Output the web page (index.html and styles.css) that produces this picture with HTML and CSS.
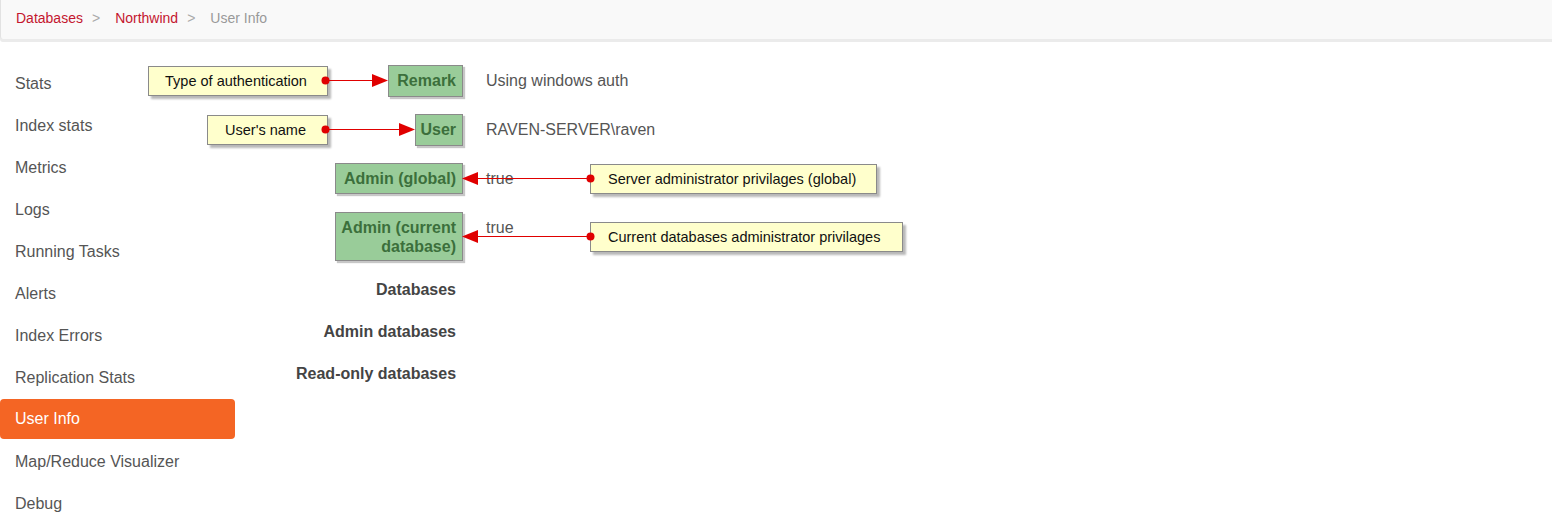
FILE: index.html
```html
<!DOCTYPE html>
<html>
<head>
<meta charset="utf-8">
<link rel="stylesheet" href="styles.css">
</head>
<body>
<div class="topbar">
  <nav class="crumbs">
    <a class="crumb-link">Databases</a><span class="sep">&gt;</span><a class="crumb-link">Northwind</a><span class="sep">&gt;</span><span class="crumb-current">User Info</span>
  </nav>
</div>
<div class="page">
  <ul class="sidebar">
    <li>Stats</li>
    <li>Index stats</li>
    <li>Metrics</li>
    <li>Logs</li>
    <li>Running Tasks</li>
    <li>Alerts</li>
    <li>Index Errors</li>
    <li class="before-active">Replication Stats</li>
    <li class="active">User Info</li>
    <li>Map/Reduce Visualizer</li>
    <li>Debug</li>
  </ul>
  <dl class="info">
    <div class="row tall"><dt>Remark</dt><dd>Using windows auth</dd></div>
    <div class="row tall"><dt>User</dt><dd>RAVEN-SERVER\raven</dd></div>
    <div class="row tall"><dt>Admin (global)</dt><dd>true</dd></div>
    <div class="row wide-gap"><dt>Admin (current database)</dt><dd>true</dd></div>
    <div class="row"><dt>Databases</dt><dd></dd></div>
    <div class="row"><dt>Admin databases</dt><dd></dd></div>
    <div class="row"><dt class="nowrap">Read-only databases</dt><dd></dd></div>
  </dl>
</div>

<div class="annotations">
  <div class="hl hl-remark"></div>
  <div class="hl hl-user"></div>
  <div class="hl hl-global"></div>
  <div class="hl hl-current"></div>

  <div class="note note-auth">Type of authentication</div>
  <div class="note note-name">User's name</div>
  <div class="note note-global">Server administrator privilages (global)</div>
  <div class="note note-current">Current databases administrator privilages</div>

  <svg class="arrows" width="1552" height="526" viewBox="0 0 1552 526">
    <g stroke="#e00000" stroke-width="1.2" fill="none">
      <line x1="326" y1="80.5" x2="376" y2="80.5"/>
      <line x1="326" y1="129.5" x2="403" y2="129.5"/>
      <line x1="590" y1="178.5" x2="474" y2="178.5"/>
      <line x1="590" y1="236.5" x2="474" y2="236.5"/>
    </g>
    <g fill="#e00000">
      <circle cx="325.5" cy="80.5" r="4"/>
      <circle cx="325.5" cy="129.5" r="4"/>
      <circle cx="590.5" cy="178.5" r="4"/>
      <circle cx="590.5" cy="236.5" r="4"/>
      <polygon points="372,74 388,80.5 372,87"/>
      <polygon points="399,123 415,129.5 399,136"/>
      <polygon points="478,172 462,178.5 478,185"/>
      <polygon points="478,230 462,236.5 478,243"/>
    </g>
  </svg>
</div>
</body>
</html>
```

FILE: styles.css
```css
* { box-sizing: border-box; }

html, body {
  margin: 0;
  padding: 0;
  background: #ffffff;
  font-family: "Liberation Sans", Arial, sans-serif;
  color: #555555;
}

body {
  position: relative;
  width: 1552px;
  height: 526px;
  overflow: hidden;
}

.topbar {
  height: 39px;
  background: #f9f9f9;
  border-left: 1px solid #e2e2e2;
  border-bottom-left-radius: 3px;
  box-shadow: 0 3px 0 #ebebeb;
  display: flex;
  align-items: center;
  padding-left: 15px;
}

.crumbs {
  font-size: 14px;
  line-height: 18px;
  margin-top: -4px;
}

.crumb-link {
  color: #c4162f;
  text-decoration: none;
}

.sep {
  color: #aaaaaa;
  margin: 0 15px 0 9px;
}

.crumb-current {
  color: #999999;
}

.page {
  display: flex;
  margin-top: 3px;
}

.sidebar {
  list-style: none;
  margin: 22px 0 0 0;
  padding: 0;
  width: 235px;
  flex: none;
}

.sidebar li {
  height: 40px;
  line-height: 40px;
  margin-bottom: 2px;
  padding-left: 15px;
  font-size: 16px;
  color: #555555;
  border-radius: 4px;
}

.sidebar li.before-active {
  margin-bottom: 1px;
}

.sidebar li.active {
  background: #f46524;
  color: #ffffff;
  height: 40px;
  line-height: 40px;
  margin-bottom: 3px;
}

.info {
  margin: 29px 0 0 61px;
  padding: 0;
}

.row {
  display: grid;
  grid-template-columns: 160px 1fr;
  column-gap: 30px;
  padding-bottom: 23px;
  font-size: 16px;
  line-height: 19px;
}

.row.tall {
  padding-bottom: 30px;
}

.row.wide-gap {
  padding-bottom: 24px;
}

.row dt {
  text-align: right;
  font-weight: bold;
  color: #444444;
  margin: 0;
}

.row dt.nowrap {
  white-space: nowrap;
}

.row dd {
  margin: 0;
  color: #555555;
}

/* annotation overlay */
.annotations {
  position: absolute;
  left: 0;
  top: 0;
  width: 1552px;
  height: 526px;
  pointer-events: none;
}

.arrows {
  position: absolute;
  left: 0;
  top: 0;
}

.hl {
  position: absolute;
  background: rgba(51, 153, 51, 0.5);
  border: 1px solid #8a8a8a;
  box-shadow: 2px 2px 1px rgba(0, 0, 0, 0.22);
}

.hl-remark { left: 388px; top: 65px; width: 75px; height: 32px; }
.hl-user { left: 415px; top: 114px; width: 48px; height: 32px; }
.hl-global { left: 335px; top: 163px; width: 128px; height: 31px; }
.hl-current { left: 335px; top: 212px; width: 128px; height: 49px; }

.note {
  position: absolute;
  height: 30px;
  line-height: 28px;
  background: #ffffcc;
  border: 1px solid #8a8a8a;
  box-shadow: 3px 3px 2px rgba(0, 0, 0, 0.28);
  color: #111111;
  font-size: 14.5px;
  text-align: center;
  white-space: nowrap;
}

.note-auth { left: 148px; top: 66px; width: 180px; padding-right: 4px; }
.note-name { left: 207px; top: 115px; width: 121px; padding-right: 4px; }
.note-global { left: 590px; top: 164px; width: 287px; text-align: left; padding-left: 17px; }
.note-current { left: 590px; top: 222px; width: 313px; text-align: left; padding-left: 17px; }
```
